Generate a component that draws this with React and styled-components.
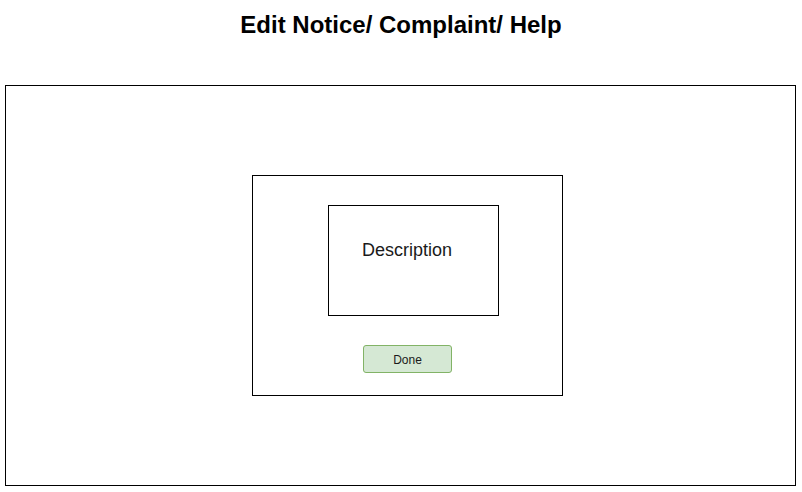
import React from "react";
import styled, { createGlobalStyle } from "styled-components";

const Global = createGlobalStyle`
  html, body { margin: 0; padding: 0; background: #ffffff; }
  body { font-family: "Liberation Sans", Arial, sans-serif; }
`;

const Page = styled.div`
  width: 802px;
  height: 492px;
  display: flex;
  flex-direction: column;
  box-sizing: border-box;
`;

const Title = styled.h1`
  margin: 0;
  height: 85px;
  padding-top: 10px;
  box-sizing: border-box;
  text-align: center;
  font-size: 24px;
  font-weight: bold;
  color: #000;
  line-height: 30px;
`;

const Frame = styled.div`
  margin-left: 5px;
  width: 791px;
  height: 401px;
  box-sizing: border-box;
  border: 1px solid #000;
  padding: 89px 0 0 246px;
`;

const Dialog = styled.div`
  width: 311px;
  height: 221px;
  box-sizing: border-box;
  border: 1px solid #000;
  padding: 29px 0 0 75px;
  display: flex;
  flex-direction: column;
  align-items: flex-start;
`;

const DescriptionBox = styled.div`
  width: 171px;
  height: 111px;
  box-sizing: border-box;
  border: 1px solid #000;
  padding: 34px 0 0 33px;
  font-size: 18px;
  line-height: 20px;
  color: #1a1a1a;
`;

const DoneButton = styled.button`
  margin: 29px 0 0 35px;
  width: 89px;
  height: 28px;
  box-sizing: border-box;
  border: 1px solid #82b366;
  border-radius: 3px;
  background: #d5e8d4;
  font-family: "Liberation Sans", Arial, sans-serif;
  font-size: 12px;
  color: #1a1a1a;
  padding: 2px 0 0 0;
  display: flex;
  align-items: center;
  justify-content: center;
`;

export default function App() {
  return (
    <>
      <Global />
      <Page>
        <Title>Edit Notice/ Complaint/ Help</Title>
        <Frame>
          <Dialog>
            <DescriptionBox>Description</DescriptionBox>
            <DoneButton>Done</DoneButton>
          </Dialog>
        </Frame>
      </Page>
    </>
  );
}
